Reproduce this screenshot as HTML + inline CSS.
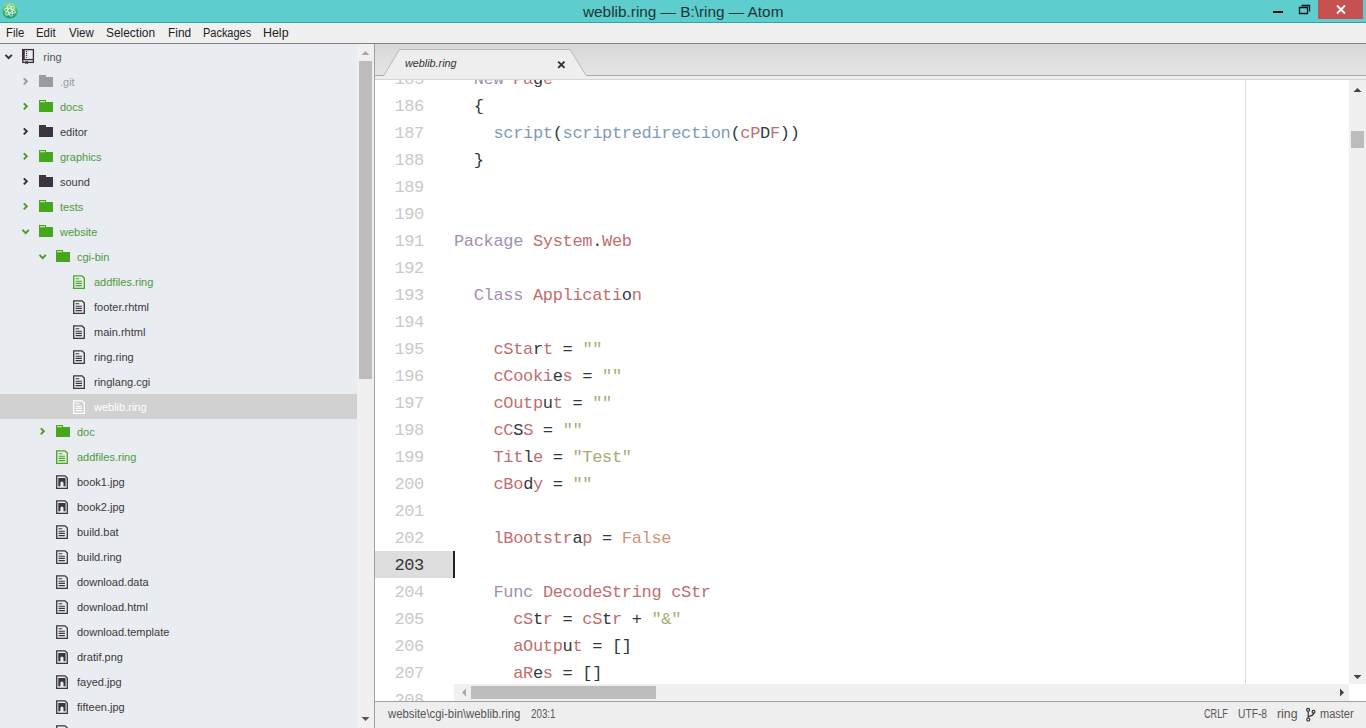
<!DOCTYPE html>
<html><head><meta charset="utf-8">
<style>
*{margin:0;padding:0;box-sizing:border-box}
html,body{width:1366px;height:728px;overflow:hidden;background:#fff;font-family:"Liberation Sans",sans-serif}
.abs{position:absolute}
.tx{position:absolute;white-space:nowrap;line-height:20px;transform-origin:0 0;font-family:"Liberation Sans",sans-serif}
i{font-style:normal}
#title{left:0;top:0;width:1366px;height:23px;background:#5dcdcd;border-bottom:1px solid #489c9c}
#menu{left:0;top:23px;width:1366px;height:21px;background:#f0f0f0;border-top:1px solid #dff6f6;border-bottom:1px solid #808080}
#tree{left:0;top:44px;width:374px;height:684px;background:#e9ecf0;overflow:hidden}
#tsb{left:357px;top:44px;width:17px;height:684px;background:#f0f0f0}
#vb{left:374px;top:44px;width:1px;height:684px;background:#a0a0a0}
#tabs{left:375px;top:44px;width:991px;height:36px;background:linear-gradient(#d8d8d8,#e7e7e7);overflow:hidden}
#editor{left:375px;top:80px;width:974px;height:621px;background:#fff;overflow:hidden}
.ln{position:absolute;left:0;width:49px;text-align:right;font-family:"Liberation Mono",monospace;font-size:17px;letter-spacing:-0.33px;color:#c9c9c9;height:27px;line-height:27px;padding-top:1px}
.ln.cur{width:78px;padding-right:29px;background:#dddddd;color:#333}
.code{position:absolute;left:79px;white-space:pre;font-family:"Liberation Mono",monospace;font-size:17px;letter-spacing:-0.33px;color:#2e3a40;height:27px;line-height:27px;padding-top:1px}
#wrap{left:870px;top:0;width:1px;height:621px;background:#dcdcdc}
#vsb{left:1349px;top:80px;width:17px;height:604px;background:#f0f0f0}
#hsb{left:454px;top:684px;width:895px;height:17px;background:#f0f0f0}
#corner{left:1349px;top:684px;width:17px;height:17px;background:#fff}
#gutfill{left:375px;top:684px;width:79px;height:17px;background:#fff;overflow:hidden}
#status{left:375px;top:701px;width:991px;height:27px;background:#eeeeee;border-top:1px solid #a0a0a0}
</style></head><body>
<div id="title" class="abs"><span class="tx" style="left:582.50px;top:2.00px;font-size:15px;color:#1d3535;transform:scaleX(1.0231);">weblib.ring — B:\ring — Atom</span>
<svg class="abs" style="left:0;top:0" width="1366" height="22">
<defs><linearGradient id="lg" x1="0" y1="0" x2="0" y2="1"><stop offset="0" stop-color="#a6d98a"/><stop offset="0.5" stop-color="#4cb870"/><stop offset="1" stop-color="#1d9a6c"/></linearGradient></defs>
<circle cx="10" cy="10.7" r="7.8" fill="url(#lg)"/>
<g fill="none" stroke="#dcffe6" stroke-width="0.9"><ellipse cx="10" cy="10.7" rx="5.8" ry="2" transform="rotate(15 10 10.7)"/><ellipse cx="10" cy="10.7" rx="5.8" ry="2" transform="rotate(75 10 10.7)"/><ellipse cx="10" cy="10.7" rx="5.8" ry="2" transform="rotate(-45 10 10.7)"/></g>
<rect x="1273" y="11" width="10" height="2" fill="#111"/>
<path d="M1299.5 7.5h8v6h-8z M1301.5 5.5h8v6" fill="none" stroke="#111" stroke-width="1.3"/>
<rect x="1318" y="0" width="45" height="19" fill="#c75050"/>
<path d="M1337 5.5l8 8M1345 5.5l-8 8" stroke="#fff" stroke-width="1.8"/>
</svg>
</div>
<div id="menu" class="abs"><span class="tx" style="left:5.86px;top:-1.10px;font-size:12px;color:#222222;transform:scaleX(0.9389);">File</span><span class="tx" style="left:35.65px;top:-1.10px;font-size:12px;color:#222222;transform:scaleX(0.9500);">Edit</span><span class="tx" style="left:69.40px;top:-1.10px;font-size:12px;color:#222222;transform:scaleX(0.9577);">View</span><span class="tx" style="left:106.41px;top:-1.10px;font-size:12px;color:#222222;transform:scaleX(0.9937);">Selection</span><span class="tx" style="left:167.61px;top:-1.10px;font-size:12px;color:#222222;transform:scaleX(0.9909);">Find</span><span class="tx" style="left:202.99px;top:-1.10px;font-size:12px;color:#222222;transform:scaleX(0.9135);">Packages</span><span class="tx" style="left:263.47px;top:-1.10px;font-size:12px;color:#222222;transform:scaleX(1.0348);">Help</span></div>
<div id="tree" class="abs"><svg width="357" height="684" viewBox="0 44 357 684" style="position:absolute;left:0;top:0"><path d="M5.45 54.9 l3.2 3.2 l3.2 -3.2" fill="none" stroke="#333" stroke-width="2"/><rect x="22.8" y="49.6" width="10.6" height="12.8" fill="none" stroke="#3b2f38" stroke-width="1.3"/><rect x="22.2" y="49" width="2.6" height="11" fill="#4a2a30"/><path d="M22.2 59.6H34" stroke="#3b2f38" stroke-width="1.3"/><circle cx="26.6" cy="51.4" r="0.65" fill="#3b2f38"/><circle cx="26.6" cy="53.4" r="0.65" fill="#3b2f38"/><circle cx="26.6" cy="55.4" r="0.65" fill="#3b2f38"/><circle cx="26.6" cy="57.3" r="0.65" fill="#3b2f38"/><path d="M25.3 61.2 h2.7 v3 l-1.35 -1 l-1.35 1z" fill="#3b2f38"/><path d="M23.8 78.35 l3 3 l-3 3" fill="none" stroke="#999" stroke-width="2"/><path d="M39 75h7v2h7v10h-14z" fill="#9b9b9b"/><path d="M23.8 103.35 l3 3 l-3 3" fill="none" stroke="#4c9a2a" stroke-width="2"/><path d="M39 100h7v2h7v10h-14z" fill="#47a71c"/><rect x="40" y="101" width="5" height="1.3" fill="#b8e890"/><path d="M23.8 128.35 l3 3 l-3 3" fill="none" stroke="#333" stroke-width="2"/><path d="M39 125h7v2h7v10h-14z" fill="#3b3540"/><path d="M23.8 153.35 l3 3 l-3 3" fill="none" stroke="#4c9a2a" stroke-width="2"/><path d="M39 150h7v2h7v10h-14z" fill="#47a71c"/><rect x="40" y="151" width="5" height="1.3" fill="#b8e890"/><path d="M23.8 178.35 l3 3 l-3 3" fill="none" stroke="#333" stroke-width="2"/><path d="M39 175h7v2h7v10h-14z" fill="#3b3540"/><path d="M23.8 203.35 l3 3 l-3 3" fill="none" stroke="#4c9a2a" stroke-width="2"/><path d="M39 200h7v2h7v10h-14z" fill="#47a71c"/><rect x="40" y="201" width="5" height="1.3" fill="#b8e890"/><path d="M22.45 229.9 l3.2 3.2 l3.2 -3.2" fill="none" stroke="#4c9a2a" stroke-width="2"/><path d="M39 225h7v2h7v10h-14z" fill="#47a71c"/><rect x="40" y="226" width="5" height="1.3" fill="#b8e890"/><path d="M39.45 254.9 l3.2 3.2 l3.2 -3.2" fill="none" stroke="#4c9a2a" stroke-width="2"/><path d="M56 250h7v2h7v10h-14z" fill="#47a71c"/><rect x="57" y="251" width="5" height="1.3" fill="#b8e890"/><path d="M73.7 275.8h8.3l2.3 2.3v10.2h-10.6z" fill="none" stroke="#47a71c" stroke-width="1.3"/><path d="M75.6 278.8h3.6M75.6 281.2h6.3M75.6 283.4h6.3M75.6 285.6h6.3" stroke="#47a71c" stroke-width="1.1"/><path d="M73.7 300.8h8.3l2.3 2.3v10.2h-10.6z" fill="none" stroke="#3b3540" stroke-width="1.3"/><path d="M75.6 303.8h3.6M75.6 306.2h6.3M75.6 308.4h6.3M75.6 310.6h6.3" stroke="#3b3540" stroke-width="1.1"/><path d="M73.7 325.8h8.3l2.3 2.3v10.2h-10.6z" fill="none" stroke="#3b3540" stroke-width="1.3"/><path d="M75.6 328.8h3.6M75.6 331.2h6.3M75.6 333.4h6.3M75.6 335.6h6.3" stroke="#3b3540" stroke-width="1.1"/><path d="M73.7 350.8h8.3l2.3 2.3v10.2h-10.6z" fill="none" stroke="#3b3540" stroke-width="1.3"/><path d="M75.6 353.8h3.6M75.6 356.2h6.3M75.6 358.4h6.3M75.6 360.6h6.3" stroke="#3b3540" stroke-width="1.1"/><path d="M73.7 375.8h8.3l2.3 2.3v10.2h-10.6z" fill="none" stroke="#3b3540" stroke-width="1.3"/><path d="M75.6 378.8h3.6M75.6 381.2h6.3M75.6 383.4h6.3M75.6 385.6h6.3" stroke="#3b3540" stroke-width="1.1"/><rect x="0" y="394" width="357" height="25" fill="#d1d1d1"/><path d="M73.7 400.8h8.3l2.3 2.3v10.2h-10.6z" fill="none" stroke="#ffffff" stroke-width="1.3"/><path d="M75.6 403.8h3.6M75.6 406.2h6.3M75.6 408.4h6.3M75.6 410.6h6.3" stroke="#ffffff" stroke-width="1.1"/><path d="M40.8 428.35 l3 3 l-3 3" fill="none" stroke="#4c9a2a" stroke-width="2"/><path d="M56 425h7v2h7v10h-14z" fill="#47a71c"/><rect x="57" y="426" width="5" height="1.3" fill="#b8e890"/><path d="M56.7 450.8h8.3l2.3 2.3v10.2h-10.6z" fill="none" stroke="#47a71c" stroke-width="1.3"/><path d="M58.6 453.8h3.6M58.6 456.2h6.3M58.6 458.4h6.3M58.6 460.6h6.3" stroke="#47a71c" stroke-width="1.1"/><path d="M56.7 475.8h8.3l2.3 2.3v10.2h-10.6z" fill="none" stroke="#3b3540" stroke-width="1.3"/><path d="M58.3 486.2v-8.3h7.3v8.3h-2.1v-3.2a1.55 1.55 0 0 0 -3.1 0v3.2z" fill="#3b3540"/><path d="M56.7 500.8h8.3l2.3 2.3v10.2h-10.6z" fill="none" stroke="#3b3540" stroke-width="1.3"/><path d="M58.3 511.2v-8.3h7.3v8.3h-2.1v-3.2a1.55 1.55 0 0 0 -3.1 0v3.2z" fill="#3b3540"/><path d="M56.7 525.8h8.3l2.3 2.3v10.2h-10.6z" fill="none" stroke="#3b3540" stroke-width="1.3"/><path d="M58.6 528.8h3.6M58.6 531.2h6.3M58.6 533.4h6.3M58.6 535.6h6.3" stroke="#3b3540" stroke-width="1.1"/><path d="M56.7 550.8h8.3l2.3 2.3v10.2h-10.6z" fill="none" stroke="#3b3540" stroke-width="1.3"/><path d="M58.6 553.8h3.6M58.6 556.2h6.3M58.6 558.4h6.3M58.6 560.6h6.3" stroke="#3b3540" stroke-width="1.1"/><path d="M56.7 575.8h8.3l2.3 2.3v10.2h-10.6z" fill="none" stroke="#3b3540" stroke-width="1.3"/><path d="M58.6 578.8h3.6M58.6 581.2h6.3M58.6 583.4h6.3M58.6 585.6h6.3" stroke="#3b3540" stroke-width="1.1"/><path d="M56.7 600.8h8.3l2.3 2.3v10.2h-10.6z" fill="none" stroke="#3b3540" stroke-width="1.3"/><path d="M58.6 603.8h3.6M58.6 606.2h6.3M58.6 608.4h6.3M58.6 610.6h6.3" stroke="#3b3540" stroke-width="1.1"/><path d="M56.7 625.8h8.3l2.3 2.3v10.2h-10.6z" fill="none" stroke="#3b3540" stroke-width="1.3"/><path d="M58.6 628.8h3.6M58.6 631.2h6.3M58.6 633.4h6.3M58.6 635.6h6.3" stroke="#3b3540" stroke-width="1.1"/><path d="M56.7 650.8h8.3l2.3 2.3v10.2h-10.6z" fill="none" stroke="#3b3540" stroke-width="1.3"/><path d="M58.3 661.2v-8.3h7.3v8.3h-2.1v-3.2a1.55 1.55 0 0 0 -3.1 0v3.2z" fill="#3b3540"/><path d="M56.7 675.8h8.3l2.3 2.3v10.2h-10.6z" fill="none" stroke="#3b3540" stroke-width="1.3"/><path d="M58.3 686.2v-8.3h7.3v8.3h-2.1v-3.2a1.55 1.55 0 0 0 -3.1 0v3.2z" fill="#3b3540"/><path d="M56.7 700.8h8.3l2.3 2.3v10.2h-10.6z" fill="none" stroke="#3b3540" stroke-width="1.3"/><path d="M58.3 711.2v-8.3h7.3v8.3h-2.1v-3.2a1.55 1.55 0 0 0 -3.1 0v3.2z" fill="#3b3540"/><path d="M56.7 725.8h8.3l2.3 2.3v10.2h-10.6z" fill="none" stroke="#3b3540" stroke-width="1.3"/><path d="M58.6 728.8h3.6M58.6 731.2h6.3M58.6 733.4h6.3M58.6 735.6h6.3" stroke="#3b3540" stroke-width="1.1"/></svg><span class="tx" style="left:43.30px;top:2.80px;font-size:11px;color:#555;transform:scaleX(1.0000);">ring</span><span class="tx" style="left:60.00px;top:27.80px;font-size:11px;color:#9b9b9b;transform:scaleX(1.0000);">.git</span><span class="tx" style="left:60.00px;top:52.80px;font-size:11px;color:#4e9a3e;transform:scaleX(1.0000);">docs</span><span class="tx" style="left:60.00px;top:77.80px;font-size:11px;color:#3a3a3a;transform:scaleX(1.0000);">editor</span><span class="tx" style="left:60.00px;top:102.80px;font-size:11px;color:#4e9a3e;transform:scaleX(1.0000);">graphics</span><span class="tx" style="left:60.00px;top:127.80px;font-size:11px;color:#3a3a3a;transform:scaleX(1.0000);">sound</span><span class="tx" style="left:60.00px;top:152.80px;font-size:11px;color:#4e9a3e;transform:scaleX(1.0000);">tests</span><span class="tx" style="left:60.00px;top:177.80px;font-size:11px;color:#4e9a3e;transform:scaleX(1.0000);">website</span><span class="tx" style="left:77.00px;top:202.80px;font-size:11px;color:#4e9a3e;transform:scaleX(1.0000);">cgi-bin</span><span class="tx" style="left:94.00px;top:227.80px;font-size:11px;color:#4e9a3e;transform:scaleX(1.0000);">addfiles.ring</span><span class="tx" style="left:94.00px;top:252.80px;font-size:11px;color:#3a3a3a;transform:scaleX(1.0000);">footer.rhtml</span><span class="tx" style="left:94.00px;top:277.80px;font-size:11px;color:#3a3a3a;transform:scaleX(1.0000);">main.rhtml</span><span class="tx" style="left:94.00px;top:302.80px;font-size:11px;color:#3a3a3a;transform:scaleX(1.0000);">ring.ring</span><span class="tx" style="left:94.00px;top:327.80px;font-size:11px;color:#3a3a3a;transform:scaleX(1.0000);">ringlang.cgi</span><span class="tx" style="left:94.00px;top:352.80px;font-size:11px;color:#ffffff;transform:scaleX(1.0000);">weblib.ring</span><span class="tx" style="left:77.00px;top:377.80px;font-size:11px;color:#4e9a3e;transform:scaleX(1.0000);">doc</span><span class="tx" style="left:77.00px;top:402.80px;font-size:11px;color:#4e9a3e;transform:scaleX(1.0000);">addfiles.ring</span><span class="tx" style="left:77.00px;top:427.80px;font-size:11px;color:#3a3a3a;transform:scaleX(1.0000);">book1.jpg</span><span class="tx" style="left:77.00px;top:452.80px;font-size:11px;color:#3a3a3a;transform:scaleX(1.0000);">book2.jpg</span><span class="tx" style="left:77.00px;top:477.80px;font-size:11px;color:#3a3a3a;transform:scaleX(1.0000);">build.bat</span><span class="tx" style="left:77.00px;top:502.80px;font-size:11px;color:#3a3a3a;transform:scaleX(1.0000);">build.ring</span><span class="tx" style="left:77.00px;top:527.80px;font-size:11px;color:#3a3a3a;transform:scaleX(1.0000);">download.data</span><span class="tx" style="left:77.00px;top:552.80px;font-size:11px;color:#3a3a3a;transform:scaleX(1.0000);">download.html</span><span class="tx" style="left:77.00px;top:577.80px;font-size:11px;color:#3a3a3a;transform:scaleX(1.0000);">download.template</span><span class="tx" style="left:77.00px;top:602.80px;font-size:11px;color:#3a3a3a;transform:scaleX(1.0000);">dratif.png</span><span class="tx" style="left:77.00px;top:627.80px;font-size:11px;color:#3a3a3a;transform:scaleX(1.0000);">fayed.jpg</span><span class="tx" style="left:77.00px;top:652.80px;font-size:11px;color:#3a3a3a;transform:scaleX(1.0000);">fifteen.jpg</span></div>
<div id="tsb" class="abs"><svg width="17" height="684" style="position:absolute;left:0;top:0"><path d="M4.5 11l4-4l4 4z" fill="#a8a8a8"/><rect x="2" y="17" width="13" height="318" fill="#bcbcbc"/><path d="M4.5 673l4 4l4-4z" fill="#555"/></svg></div>
<div id="vb" class="abs"></div>
<div id="tabs" class="abs">
<svg width="991" height="36" style="position:absolute;left:0;top:0">
<rect x="0" y="31" width="991" height="1" fill="#a9a9a9"/>
<rect x="0" y="32" width="991" height="4" fill="#eeeeee"/>
<rect x="0" y="35" width="991" height="1" fill="#d6d6d6"/>
<path d="M8.5 32 L24.5 5.5 H195 L211.5 32" fill="#eeeeee" stroke="#b8b8b8" stroke-width="1"/>
<rect x="9" y="31" width="202" height="2" fill="#eeeeee"/>
<path d="M183.2 17.6l6.3 6.3M189.5 17.6l-6.3 6.3" stroke="#333" stroke-width="2"/>
</svg>
<span class="tx" style="left:30.40px;top:8.70px;font-size:11.5px;font-style:italic;color:#333;transform:scaleX(0.9382);">weblib.ring</span>
</div>
<div id="editor" class="abs">
<div id="wrap" class="abs"></div>
<div class="ln" style="top:-15px">185</div><div class="code" style="top:-15px">  <i style="color:#a48fb0">New</i> <i style="color:#bf6f6f">Pa</i>g<i style="color:#bf6f6f">e</i></div><div class="ln" style="top:12px">186</div><div class="code" style="top:12px">  {</div><div class="ln" style="top:39px">187</div><div class="code" style="top:39px">    <i style="color:#7f9db8">script</i>(<i style="color:#7f9db8">scriptredirection</i>(<i style="color:#bf6f6f">cP</i>D<i style="color:#bf6f6f">F</i>))</div><div class="ln" style="top:66px">188</div><div class="code" style="top:66px">  }</div><div class="ln" style="top:93px">189</div><div class="ln" style="top:120px">190</div><div class="ln" style="top:147px">191</div><div class="code" style="top:147px"><i style="color:#a48fb0">Package</i> <i style="color:#bf6f6f">System</i>.<i style="color:#bf6f6f">Web</i></div><div class="ln" style="top:174px">192</div><div class="ln" style="top:201px">193</div><div class="code" style="top:201px">  <i style="color:#a48fb0">Class</i> <i style="color:#bf6f6f">Applicati</i>o<i style="color:#bf6f6f">n</i></div><div class="ln" style="top:228px">194</div><div class="ln" style="top:255px">195</div><div class="code" style="top:255px">    <i style="color:#bf6f6f">cSta</i>r<i style="color:#bf6f6f">t</i> = <i style="color:#a9ac72">""</i></div><div class="ln" style="top:282px">196</div><div class="code" style="top:282px">    <i style="color:#bf6f6f">cCooki</i>e<i style="color:#bf6f6f">s</i> = <i style="color:#a9ac72">""</i></div><div class="ln" style="top:309px">197</div><div class="code" style="top:309px">    <i style="color:#bf6f6f">cOutp</i>u<i style="color:#bf6f6f">t</i> = <i style="color:#a9ac72">""</i></div><div class="ln" style="top:336px">198</div><div class="code" style="top:336px">    <i style="color:#bf6f6f">cC</i>S<i style="color:#bf6f6f">S</i> = <i style="color:#a9ac72">""</i></div><div class="ln" style="top:363px">199</div><div class="code" style="top:363px">    <i style="color:#bf6f6f">Tit</i>l<i style="color:#bf6f6f">e</i> = <i style="color:#a9ac72">"Test"</i></div><div class="ln" style="top:390px">200</div><div class="code" style="top:390px">    <i style="color:#bf6f6f">cBo</i>d<i style="color:#bf6f6f">y</i> = <i style="color:#a9ac72">""</i></div><div class="ln" style="top:417px">201</div><div class="ln" style="top:444px">202</div><div class="code" style="top:444px">    <i style="color:#bf6f6f">lBootstr</i>a<i style="color:#bf6f6f">p</i> = <i style="color:#cf9574">False</i></div><div class="ln cur" style="top:471px">203</div><div class="ln" style="top:498px">204</div><div class="code" style="top:498px">    <i style="color:#a48fb0">Func</i> <i style="color:#bf6f6f">DecodeString</i> <i style="color:#bf6f6f">cStr</i></div><div class="ln" style="top:525px">205</div><div class="code" style="top:525px">      <i style="color:#bf6f6f">cS</i>t<i style="color:#bf6f6f">r</i> = <i style="color:#bf6f6f">cS</i>t<i style="color:#bf6f6f">r</i> + <i style="color:#a9ac72">"&amp;"</i></div><div class="ln" style="top:552px">206</div><div class="code" style="top:552px">      <i style="color:#bf6f6f">aOutp</i>u<i style="color:#bf6f6f">t</i> = []</div><div class="ln" style="top:579px">207</div><div class="code" style="top:579px">      <i style="color:#bf6f6f">aR</i>e<i style="color:#bf6f6f">s</i> = []</div><div class="ln" style="top:606px">208</div>
<div class="abs" style="left:78px;top:471px;width:2px;height:27px;background:#222"></div>
</div>
<div id="vsb" class="abs"><svg width="17" height="604" style="position:absolute;left:0;top:0"><path d="M4.5 12l4-4l4 4z" fill="#444"/><rect x="2" y="51" width="13" height="17" fill="#bcbcbc"/><path d="M4.5 595l4 4l4-4z" fill="#444"/></svg></div>
<div id="hsb" class="abs"><svg width="895" height="17" style="position:absolute;left:0;top:0"><path d="M12 4.5l-4 4l4 4z" fill="#aaa"/><rect x="17" y="2" width="185" height="13" fill="#bcbcbc"/><path d="M886 4.5l4 4l-4 4z" fill="#444"/></svg></div>
<div id="corner" class="abs"></div>
<div id="status" class="abs">
<span class="tx" style="left:12.60px;top:1.60px;font-size:12px;color:#555;transform:scaleX(0.9443);">website\cgi-bin\weblib.ring</span><span class="tx" style="left:155.80px;top:1.60px;font-size:12px;color:#555;transform:scaleX(0.8167);">203:1</span><span class="tx" style="left:829.40px;top:1.60px;font-size:12px;color:#555;transform:scaleX(0.7613);">CRLF</span><span class="tx" style="left:862.95px;top:1.60px;font-size:12px;color:#555;transform:scaleX(0.8545);">UTF-8</span><span class="tx" style="left:901.58px;top:1.60px;font-size:12px;color:#555;transform:scaleX(1.0222);">ring</span><span class="tx" style="left:944.88px;top:1.60px;font-size:12px;color:#555;transform:scaleX(0.9167);">master</span>
<svg class="abs" style="left:930px;top:5px" width="12" height="16"><g fill="none" stroke="#333" stroke-width="1.2"><circle cx="3.1" cy="2.8" r="1.5"/><circle cx="3.3" cy="12.5" r="1.5"/><circle cx="8.5" cy="4.8" r="1.4"/><path d="M3.2 4.3V11M8.5 6.2C8.5 9 5 8.8 3.2 9.6"/></g></svg>
</div>
</body></html>
